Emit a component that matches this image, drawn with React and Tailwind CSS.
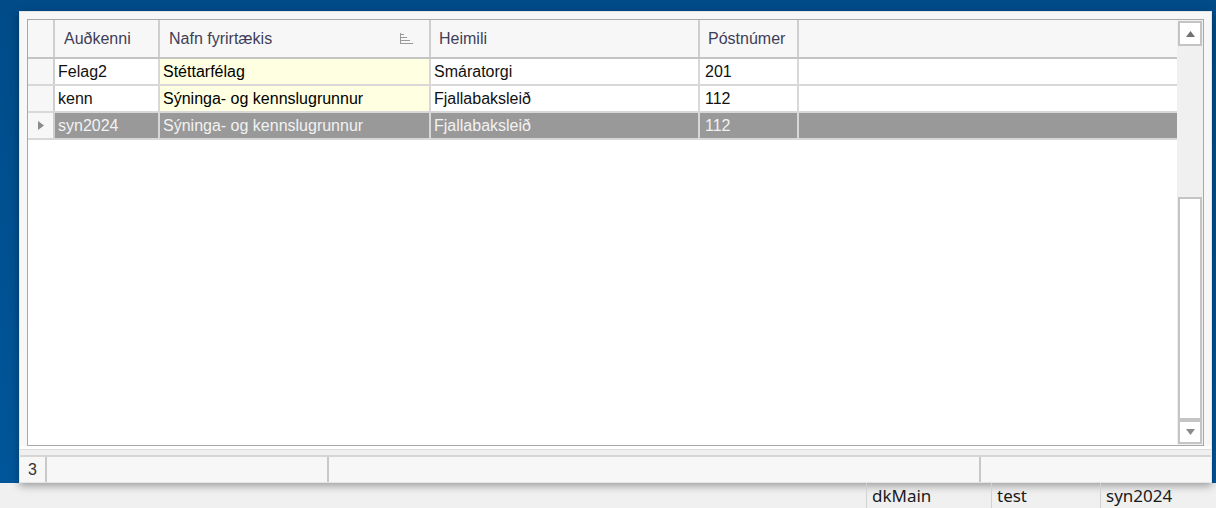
import React from 'react';

const cols = 'grid grid-cols-[27px_105px_271px_269px_99px_1fr]';

const rows = [
    { id: 'Felag2', name: 'Stéttarfélag', addr: 'Smáratorgi', zip: '201' },
    { id: 'kenn', name: 'Sýninga- og kennslugrunnur', addr: 'Fjallabaksleið', zip: '112' },
    { id: 'syn2024', name: 'Sýninga- og kennslugrunnur', addr: 'Fjallabaksleið', zip: '112', selected: true },
];

const SortIcon = () => (
    <svg width="13" height="11" viewBox="0 0 13 11" className="shrink-0">
        <rect x="0" y="0" width="1" height="11" fill="#9a9a9a" />
        <rect x="1" y="1" width="3" height="1" fill="#9a9a9a" />
        <rect x="1" y="4" width="6" height="1" fill="#9a9a9a" />
        <rect x="1" y="7" width="9" height="1" fill="#9a9a9a" />
        <rect x="1" y="10" width="12" height="1" fill="#9a9a9a" />
    </svg>
);

const App = () => {
    return (
        <div className="w-[1216px] h-[508px] overflow-hidden flex flex-col bg-[#f0f0f0] font-['Liberation_Sans',Arial,sans-serif]">
            {/* blue desktop area with the window */}
            <div className="h-[483px] shrink-0 bg-gradient-to-b from-[#004b88] to-[#00569a] pt-[11px] pl-[19px]">
                <div className="w-[1193px] h-[472px] bg-[#f7f7f7] border border-[#e4e4e4] shadow-[0_3px_8px_rgba(0,0,0,0.35)] flex flex-col">
                    <div className="pt-[7px] pl-[7px]">
                        <div className="w-[1177px] h-[427px] border border-[#a8a8a8] bg-white flex">
                            {/* table */}
                            <div className="flex-1 flex flex-col text-[16px] leading-none">
                                <div className={`${cols} h-[39px] bg-[#f7f7f7] border-b-2 border-[#c4c4c4] text-[#3e3e58]`}>
                                    <div className="border-r-2 border-[#cfcfcf]"></div>
                                    <div className="border-r-2 border-[#cfcfcf] flex items-center pl-[9px]">Auðkenni</div>
                                    <div className="border-r-2 border-[#cfcfcf] flex items-center pl-[9px] pr-[16px] justify-between">
                                        <span>Nafn fyrirtækis</span>
                                        <SortIcon />
                                    </div>
                                    <div className="border-r-2 border-[#cfcfcf] flex items-center pl-[8px]">Heimili</div>
                                    <div className="border-r-2 border-[#cfcfcf] flex items-center pl-[8px]">Póstnúmer</div>
                                    <div></div>
                                </div>
                                {rows.map((r) => (
                                    <div
                                        key={r.id}
                                        className={`${cols} h-[27px] border-b-2 border-[#d8d8d8] ${r.selected ? 'bg-[#999999] text-[#f2f2f2]' : 'text-[#111111]'}`}
                                    >
                                        <div className="bg-[#f7f7f7] border-r-2 border-[#cfcfcf] flex items-center justify-center">
                                            {r.selected && (
                                                <svg width="6" height="9" viewBox="0 0 6 9">
                                                    <path d="M0 0 L6 4.5 L0 9 Z" fill="#8a8a8a" />
                                                </svg>
                                            )}
                                        </div>
                                        <div className={`border-r-2 border-[#d8d8d8] flex items-center pl-[3px] ${r.selected ? '' : 'bg-white'}`}>{r.id}</div>
                                        <div className={`border-r-2 border-[#d8d8d8] flex items-center pl-[3px] ${r.selected ? '' : 'bg-[#ffffe2] text-black'}`}>{r.name}</div>
                                        <div className="border-r-2 border-[#d8d8d8] flex items-center pl-[3px]">{r.addr}</div>
                                        <div className="border-r-2 border-[#d8d8d8] flex items-center pl-[5px]">{r.zip}</div>
                                        <div></div>
                                    </div>
                                ))}
                            </div>
                            {/* vertical scrollbar */}
                            <div className="w-[26px] flex flex-col bg-[#f0f0f0]">
                                <div className="h-[25px] mx-[1px] mt-[1px] bg-white border-2 border-[#c4c4c4] flex items-center justify-center">
                                    <svg width="9" height="6" viewBox="0 0 9 6">
                                        <path d="M4.5 0 L9 6 L0 6 Z" fill="#707070" />
                                    </svg>
                                </div>
                                <div className="h-[151px]"></div>
                                <div className="flex-1 mx-[1px] bg-white border-2 border-[#c4c4c4]"></div>
                                <div className="h-[24px] mx-[1px] mb-[1px] bg-white border-2 border-[#c4c4c4] flex items-center justify-center">
                                    <svg width="9" height="6" viewBox="0 0 9 6">
                                        <path d="M0 0 L9 0 L4.5 6 Z" fill="#8a8a8a" />
                                    </svg>
                                </div>
                            </div>
                        </div>
                    </div>
                    <div className="h-[3px] bg-white"></div>
                    <div className="h-[6px] border-t border-[#dcdcdc] bg-[#f0f0f0]"></div>
                    {/* window status bar */}
                    <div className="flex-1 flex border-t-2 border-[#d6d6d6] bg-[#f7f7f7] text-[16px] text-[#333]">
                        <div className="w-[27px] border-r-2 border-[#c8c8c8] flex items-center pl-[8px]">3</div>
                        <div className="w-[282px] border-r-2 border-[#c8c8c8]"></div>
                        <div className="w-[652px] border-r-2 border-[#c8c8c8]"></div>
                        <div className="flex-1"></div>
                    </div>
                </div>
            </div>
            {/* application status bar */}
            <div className="flex-1 flex text-[17px] text-[#1a1a1a] font-['Noto_Sans',sans-serif] leading-none">
                <div className="w-[867px] border-r border-[#d2d2d2]"></div>
                <div className="w-[125px] border-r border-[#d2d2d2] flex items-center pl-[5px]">dkMain</div>
                <div className="w-[109px] border-r border-[#d2d2d2] flex items-center pl-[5px]">test</div>
                <div className="flex-1 flex items-center pl-[5px]">syn2024</div>
            </div>
        </div>
    );
};

export default App;
